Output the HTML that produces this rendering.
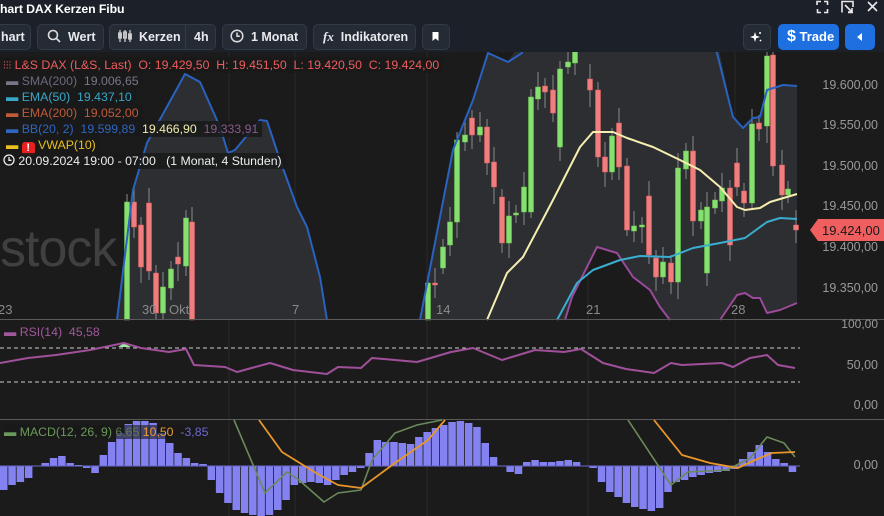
<!DOCTYPE html>
<html><head><meta charset="utf-8">
<style>
*{margin:0;padding:0;box-sizing:border-box}
body{width:884px;height:516px;overflow:hidden;background:#1c1b1b;font-family:"Liberation Sans",sans-serif;position:relative}
#top{position:absolute;left:0;top:0;width:884px;height:52px;background:#1b2029}
.t{position:absolute;color:#fff;font-weight:bold;font-size:13px}
.btn{position:absolute;top:24px;height:26px;background:#252b35;border:1px solid #323a46;border-radius:5px;color:#e8eaee;font-weight:bold;font-size:12.5px;line-height:24px;white-space:nowrap}
.blue{background:#1e6fe0;border-color:#1e6fe0;color:#fff}
.leg{position:absolute;left:0;font-size:12.3px;white-space:nowrap;height:16px;line-height:16px;background:rgba(25,25,25,.85);padding-right:4px}
.ax{position:absolute;font-size:12.5px;color:#9a9a9a;right:6px}
.xl{position:absolute;font-size:13px;color:#8a8a8a;top:302px}
</style></head><body>
<div id="top">
<div class="t" style="left:0;top:2px;font-size:12.3px;letter-spacing:-0.1px">hart DAX Kerzen Fibu</div>
<svg style="position:absolute;left:816px;top:0" width="68" height="16" fill="none" stroke="#e8e8e8" stroke-width="1.6">
<path d="M1 5V1.5H5M8 1.5H11.5V5M11.5 9V12.5H8M5 12.5H1.5V9"/>
<path d="M26 12.5V1.5H37V7M37 12.5H32M29 5L36 12M36 8V12H32"/>
<path d="M52 2L61 11M61 2L52 11"/></svg>
<div class="btn" style="left:-6px;width:37px;padding-left:6px">hart</div>
<div class="btn" style="left:37px;width:67px;padding-left:9px"><svg width="14" height="14" style="vertical-align:-2px" fill="none" stroke="#ddd" stroke-width="1.6"><circle cx="6" cy="6" r="4.5"/><path d="M9.5 9.5L13 13"/></svg> &nbsp;Wert</div>
<div class="btn" style="left:109px;width:107px;padding-left:8px"><svg width="14" height="14" style="vertical-align:-2px" stroke="#ccc" stroke-width="1.3" fill="none"><path d="M2 1v12M7 1v12M12 1v12"/><rect x="0.7" y="4" width="2.6" height="5" fill="#ccc"/><rect x="5.7" y="3" width="2.6" height="6"/><rect x="10.7" y="5" width="2.6" height="5" fill="#ccc"/></svg>&nbsp; Kerzen<span style="position:absolute;left:75px;top:0;height:24px;border-left:1px solid #323a46;padding-left:8px">4h</span></div>
<div class="btn" style="left:222px;width:85px;padding-left:7px"><svg width="14" height="14" style="vertical-align:-2px" fill="none" stroke="#ddd" stroke-width="1.5"><circle cx="7" cy="7" r="5.8"/><path d="M7 3.5V7.3H9.8"/></svg>&nbsp; 1 Monat</div>
<div class="btn" style="left:313px;width:103px;padding-left:9px"><i style="font-family:'Liberation Serif',serif;font-size:13px">fx</i>&nbsp; Indikatoren</div>
<div class="btn" style="left:422px;width:28px"><svg width="26" height="24"><path d="M9.5 7H15.5V16L12.5 13.5L9.5 16Z" fill="#fff"/></svg></div>
<div class="btn" style="left:743px;width:28px"><svg width="26" height="24" fill="#fff"><path d="M11 7L12.2 10.8L16 12L12.2 13.2L11 17L9.8 13.2L6 12L9.8 10.8Z"/><circle cx="16" cy="8" r="1"/><circle cx="16.5" cy="15.5" r=".9"/></svg></div>
<div class="btn blue" style="left:778px;width:61px;padding-left:8px;font-size:13px"><span style="font-size:16px">$</span> Trade</div>
<div class="btn blue" style="left:845px;width:30px"><svg width="28" height="24"><path d="M16 8V16L11 12Z" fill="#fff"/></svg></div>
</div>

<svg id="ch" style="position:absolute;left:0;top:52px" width="884" height="464" viewBox="0 52 884 464"></svg>

<div style="position:absolute;left:0px;top:219px;font-size:52px;color:#404040;letter-spacing:-1px">stock</div>

<div class="leg" style="top:57px;color:#ee5d5d;padding-left:3px"><span style="font-size:11px">⫶⫶⫶</span> L&amp;S DAX (L&amp;S, Last) &nbsp;O: 19.429,50 &nbsp;H: 19.451,50 &nbsp;L: 19.420,50 &nbsp;C: 19.424,00</div>
<div class="leg" style="top:73px;color:#77778a;padding-left:6px">▬ <span style="color:#6a6a80">SMA(200)</span> &nbsp;19.006,65</div>
<div class="leg" style="top:89px;color:#38a8c8;padding-left:6px">▬ EMA(50) &nbsp;19.437,10</div>
<div class="leg" style="top:105px;color:#c05a38;padding-left:6px">▬ EMA(200) &nbsp;19.052,00</div>
<div class="leg" style="top:121px;color:#2e66c0;padding-left:6px">▬ BB(20, 2) &nbsp;19.599,89 &nbsp;<span style="color:#f2ecb0">19.466,90</span> &nbsp;<span style="color:#8a5a8a">19.333,91</span></div>
<div class="leg" style="top:137px;color:#e8c020;padding-left:6px">▬ <span style="display:inline-block;width:13px;height:13px;background:#e82020;border-radius:3px;color:#fff;text-align:center;font-weight:bold;font-size:11px;line-height:13px;vertical-align:-2px">!</span> VWAP(10)</div>
<div class="leg" style="top:153px;color:#eee;padding-left:3px"><svg width="12" height="12" style="vertical-align:-1px" fill="none" stroke="#eee" stroke-width="1.3"><circle cx="6" cy="6" r="5"/><path d="M6 3V6.3H8.5"/></svg> 20.09.2024 19:00 - 07:00 &nbsp;&nbsp;(1 Monat, 4 Stunden)</div>

<div class="ax" style="top:78px">19.600,00</div>
<div class="ax" style="top:118px">19.550,00</div>
<div class="ax" style="top:159px">19.500,00</div>
<div class="ax" style="top:199px">19.450,00</div>
<div class="ax" style="top:240px">19.400,00</div>
<div class="ax" style="top:281px">19.350,00</div>
<svg style="position:absolute;left:810px;top:219px" width="74" height="22"><path d="M8 0H74V22H8L0 11Z" fill="#ef5f5f"/><text x="12" y="16" font-family="Liberation Sans" font-size="13" fill="#1a1a1a">19.424,00</text></svg>

<div class="xl" style="left:-2px">23</div><div class="xl" style="left:142px">30</div><div class="xl" style="left:169px">Okt</div><div class="xl" style="left:292px">7</div><div class="xl" style="left:436px">14</div><div class="xl" style="left:586px">21</div><div class="xl" style="left:731px">28</div>

<div class="ax" style="top:317px;font-size:12px">100,00</div>
<div class="ax" style="top:358px">50,00</div>
<div class="ax" style="top:398px">0,00</div>
<div class="ax" style="top:458px">0,00</div>
<div style="position:absolute;left:4px;top:325px;font-size:12.3px;color:#a0589a">▬ RSI(14) &nbsp;45,58</div>
<div style="position:absolute;left:4px;top:425px;font-size:12.3px;color:#6a9a5a;background:rgba(25,25,25,.6)">▬ MACD(12, 26, 9) <span style="color:#5a7a50">6,65</span> <span style="color:#e89a30">10,50</span> &nbsp;<span style="color:#6a6ad0">-3,85</span></div>

<script>
var s='';
function P(a){return a.map(function(p){return p[0]+','+p[1]}).join(' ');}
[229,295,427,588,735].forEach(function(x){s+='<line x1="'+x+'" y1="52" x2="'+x+'" y2="516" stroke="#2a2a2a"/>';});
var up1=[[117,320],[133,190],[147,143],[185,74],[200,82],[220,127],[228,153],[235,150],[260,120],[267,121],[280,160],[297,207],[307,227],[320,277],[327,320]];
var up2=[[420,320],[453,150],[473,100],[488,53],[508,62],[522,40],[717,40],[733,117],[743,128],[753,118],[760,117],[767,90],[783,85],[797,86]];
var lo2=[[797,303],[780,310],[767,313],[760,298],[753,298],[745,293],[737,295],[720,320],[670,320],[660,307],[650,290],[633,277],[617,253],[607,250],[597,247],[572,297],[565,320]];
s+='<polygon points="'+P(up1)+'" fill="#2c2e31"/>';
s+='<polygon points="'+P(up2.concat(lo2))+'" fill="#2c2e31"/>';
var C=[[127,202,320,1],[134,202,227,0],[141,225,267,0],[149,203,271,0],[156,273,313,0],[163,287,313,1],[171,269,288,1],[178,257,264,0],[186,218,266,1],[192,222,320,0],
[428,283,320,1],[435,283,285,0],[443,247,268,1],[450,222,245,1],[457,140,222,1],[465,135,142,1],[472,118,135,0],[480,127,135,1],[487,127,163,0],[494,162,187,0],[502,197,243,0],[509,216,243,1],[516,213,215,1],[524,187,212,1],[531,97,212,1],[538,87,99,1],[545,86,92,0],[553,90,113,0],[560,69,147,1],[568,62,67,1],[575,52,63,1],[590,79,90,0],[598,90,157,0],[605,157,172,0],[612,136,172,1],[619,123,167,0],[627,166,230,0],[634,226,231,1],[642,225,227,1],[649,196,255,0],[656,258,277,0],[663,262,277,1],[671,263,282,0],[678,168,282,1],[686,151,169,1],[693,151,221,0],[701,210,221,1],[707,207,273,1],[715,200,208,1],[722,188,201,1],[730,188,245,0],[737,163,187,0],[744,191,203,0],[752,124,203,1],[759,123,129,0],[767,56,126,1],[773,55,166,0],[782,165,195,0],[788,189,195,1],[796,225,230,0]];
C.forEach(function(c,i){var h=c[2]-c[1];var t=Math.max(52,c[1]-8-(i*7)%14),b=Math.min(320,c[2]+6+(i*5)%12);
s+='<line x1="'+c[0]+'" y1="'+t+'" x2="'+c[0]+'" y2="'+b+'" stroke="#8a8a8a" stroke-width="1"/>';
s+='<rect x="'+(c[0]-2.5)+'" y="'+c[1]+'" width="5" height="'+Math.max(2,h)+'" fill="'+(c[3]?'#86e070':'#f07e7e')+'" stroke="'+(c[3]?'#6ac850':'#e06060')+'" stroke-width=".5"/>';});
function L(a,c,w){s+='<polyline points="'+P(a)+'" fill="none" stroke="'+c+'" stroke-width="'+(w||2)+'" stroke-linejoin="round"/>';}
L(up1,'#2a62c0');L(up2.slice(0,5).concat([[522,53],[525,40]]),'#2a62c0');L([[713,40],[717,53]].concat(up2.slice(7)),'#2a62c0');
L([[565,320],[572,297],[597,247],[607,250],[617,253],[633,277],[650,290],[660,307],[670,320]],'#9a4a9a');
L([[720,320],[737,295],[745,293],[753,298],[760,298],[767,313],[780,310],[797,303]],'#9a4a9a');
L([[487,320],[507,273],[523,257],[553,200],[580,147],[593,132],[613,132],[627,138],[653,147],[680,160],[700,170],[720,187],[737,207],[745,210],[760,208],[770,202],[797,194]],'#f5eeb0');
L([[557,320],[577,283],[593,270],[620,260],[640,256],[670,257],[693,248],[720,243],[745,238],[767,222],[780,218],[797,219]],'#3aaed0');
s+='<line x1="0" y1="319.5" x2="884" y2="319.5" stroke="#5a5a5a"/><line x1="0" y1="419.5" x2="884" y2="419.5" stroke="#5a5a5a"/>';
s+='<line x1="0" y1="348" x2="800" y2="348" stroke="#ccc" stroke-dasharray="4,3"/><line x1="0" y1="382" x2="800" y2="382" stroke="#ccc" stroke-dasharray="4,3"/>';
s+='<polygon points="118,347 124,343 131,347" fill="#a0e8a0"/>';
L([[0,363],[28,358],[56,355],[90,350],[124,343],[141,348],[169,352],[186,349],[194,365],[225,367],[237,372],[270,363],[293,370],[327,374],[338,367],[361,368],[372,358],[395,360],[417,362],[451,352],[473,348],[502,360],[535,350],[564,352],[581,349],[603,363],[626,369],[654,373],[671,363],[682,365],[722,363],[733,367],[750,358],[767,355],[778,365],[795,368]],'#a0509a',2);
var H=[-24,-19,-16,-12,0,3,8,10,3,1,-2,-7,11,24,33,42,45,45,43,33,23,13,8,3,2,-14,-27,-37,-44,-47,-49,-50,-49,-44,-34,-19,-17,-16,-17,-19,-14,-9,-6,-2,13,26,24,24,23,22,29,34,38,41,44,45,43,39,23,9,0,-6,-8,4,6,4,4,5,6,4,0,-2,-16,-26,-31,-37,-41,-43,-45,-42,-26,-16,-14,-11,-9,-7,-6,-5,-3,7,14,21,14,7,3,-6];
var w=797/H.length;
H.forEach(function(v,i){var x=i*w;if(v==0)return;s+='<rect x="'+x.toFixed(1)+'" y="'+(v>0?466-v:466)+'" width="'+(w-0.8).toFixed(1)+'" height="'+Math.abs(v)+'" fill="#8482f0"/>';});
s+='<line x1="0" y1="466" x2="800" y2="466" stroke="#6a6ad0" stroke-width="1"/>';
L([[234,420],[265,493],[287,472],[299,480],[324,502],[338,493],[361,490],[372,460],[395,433],[417,425],[442,420]],'#6a8a5a',1.6);
L([[628,420],[671,485],[688,472],[727,470],[750,458],[767,437],[784,443],[795,457]],'#6a8a5a',1.6);
L([[259,420],[282,452],[316,473],[338,485],[361,488],[395,463],[428,440],[445,420]],'#e8962a',1.8);
L([[654,420],[682,455],[710,463],[738,468],[755,460],[772,453],[795,452]],'#e8962a',1.8);
document.getElementById('ch').innerHTML=s;
</script>
</body></html>
